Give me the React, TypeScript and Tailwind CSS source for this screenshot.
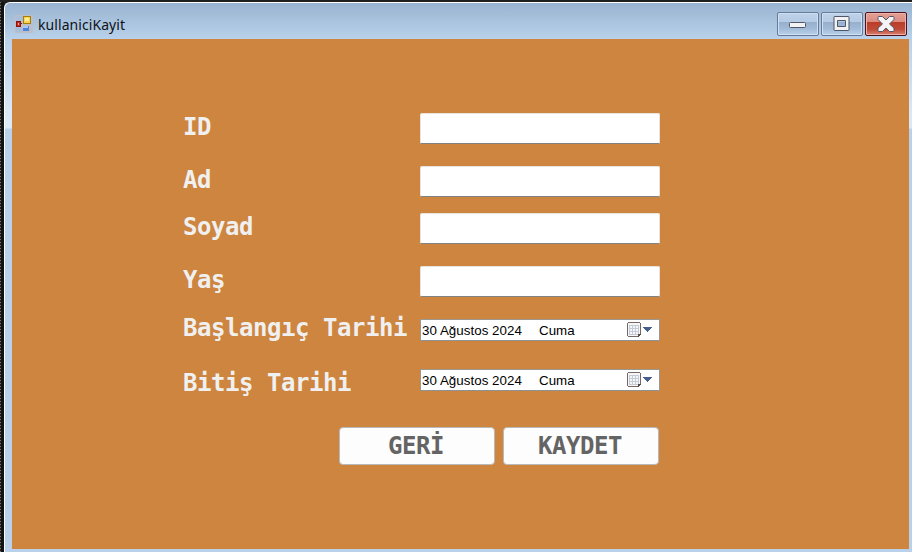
import type { ReactNode } from "react";

function AppIcon() {
  return (
    <svg width="18" height="18" viewBox="0 0 18 18" shapeRendering="crispEdges">
      <rect x="0" y="0" width="18" height="18" fill="#bdbfc6" />
      <rect x="1" y="1" width="7" height="5" fill="#a9bfd9" />
      <rect x="1" y="12" width="6" height="5" fill="#a9bfd9" />
      <rect x="8.500" y="1.500" width="7" height="7" fill="#fbd24e" stroke="#a67c0b" />
      <rect x="10" y="3" width="4" height="3" fill="#ffec9c" />
      <rect x="1.500" y="6.500" width="4" height="5" fill="#c9281c" stroke="#8c1410" />
      <rect x="3" y="8" width="1" height="2" fill="#ffb09c" />
      <rect x="6" y="8" width="1" height="1" fill="#333" />
      <rect x="8" y="11" width="6" height="5" fill="#4f83e2" />
      <rect x="8" y="11" width="5" height="2" fill="#a6c8fb" />
    </svg>
  );
}

function CaptionButton({ close, children }: { close?: boolean; children: ReactNode }) {
  const tone = close
    ? "border-[#4b1420] bg-[linear-gradient(#e3a096_0,#dc8b80_41%,#b93c28_41%,#c04b38_75%,#d98272_100%)] shadow-[inset_0_0_0_1px_#eeb0a7]"
    : "border-[#677a99] bg-[linear-gradient(#bed2e8_0,#b5cbe4_41%,#95afcc_41%,#a0bad7_70%,#b9d1eb_100%)] shadow-[inset_0_0_0_1px_#cfe0f2]";
  return (
    <button className={"flex h-[24px] w-[42px] items-center justify-center rounded-[2px] border " + tone}>
      {children}
    </button>
  );
}

function CalendarIcon() {
  return (
    <svg width="26" height="16" viewBox="0 0 26 16" shapeRendering="crispEdges">
      <rect x="1" y="1" width="12" height="14" fill="#f7f6f6" />
      <path d="M1 0h12v1H1zM0 1h1v13H0zM13 1h1v11h-1zM1 14h10v1H1z" fill="#756966" />
      <rect x="2" y="3" width="10" height="10" fill="#c5cad4" />
      <g fill="#f3f6fa">
        {[4, 7, 10].map((y) => [3, 6, 9].map((x) => <rect key={x + "-" + y} x={x} y={y} width="2" height="2" />))}
      </g>
      <path d="M11 12h3v1h-1v1h-1v1h-1z" fill="#554a48" />
      <path d="M16 5h9v1h-1v1h-1v1h-1v1h-1v1h-1V9h-1V8h-1V7h-1V6h-1z" fill="#465f8c" />
    </svg>
  );
}

function TextField() {
  return (
    <input className="block h-[31px] w-[240px] rounded-[2px] border border-[#e7e4e0] border-b-[#7f8182] bg-white px-1 outline-none" />
  );
}

function DateField() {
  return (
    <div className="flex h-[22px] w-[240px] items-center rounded-[1px] border border-[#9b9890] border-b-[#8d9294] bg-white pl-[1px] pr-[6px] font-['Liberation_Sans',sans-serif] text-[13.330px] leading-[20px] text-black">
      <span className="w-[117px] whitespace-nowrap pt-[2px] tracking-[0.040px]">30 Ağustos 2024</span>
      <span className="grow pt-[2px]">Cuma</span>
      <CalendarIcon />
    </div>
  );
}

function Row({ label, height, children }: { label: string; height: string; children: ReactNode }) {
  return (
    <div className={"flex " + height}>
      <label className="w-[237px] whitespace-nowrap text-[24px] font-bold leading-[28px] tracking-[-0.450px] text-[#f0f0f0]">
        {label}
      </label>
      {children}
    </div>
  );
}

function FormButton({ children }: { children: ReactNode }) {
  return (
    <button className="h-[38px] w-[156px] rounded-[4px] border border-[#b8b9ba] bg-[#fdfdfd] pr-[2px] text-[24px] font-bold leading-[34px] tracking-[-0.450px] text-[#646464]">
      {children}
    </button>
  );
}

export default function App() {
  return (
    <div className="flex h-[552px] w-[912px] overflow-hidden bg-[#202020] pt-[2px]">
      <div className="w-px bg-[repeating-linear-gradient(#777_0_1px,#222_1px_3px)]" />
      <div className="w-[3px] bg-[#131313]" />
      <div className="flex grow flex-col rounded-tl-[6px] border-l border-t border-white bg-[linear-gradient(#99b4d1_0,#b9d1ea_36px,#d9e6f5_105px,#dce9f6_125px,#b9d1ea_126px)] pl-[7px] pr-[3px] pb-[3px]">
        <header className="flex h-[36px] shrink-0 items-start">
          <div className="ml-[3px] mt-[12px]">
            <AppIcon />
          </div>
          <h1 className="ml-[5px] mt-[12px] grow font-['Noto_Sans','Open_Sans',sans-serif] text-[14px] leading-[20px] tracking-[0.070px] text-[#101318]">
            kullaniciKayit
          </h1>
          <div className="mr-[2px] mt-[9px] flex gap-[2px]">
            <CaptionButton>
              <svg width="18" height="7" viewBox="0 0 18 7" className="relative top-[1px]">
                <rect x=".5" y=".5" width="16" height="5" rx="1" fill="#f2f2f2" stroke="#50566a" />
              </svg>
            </CaptionButton>
            <CaptionButton>
              <svg width="18" height="16" viewBox="0 0 18 16">
                <path fillRule="evenodd" d="M1.500.5h14q.5 0 .5.500v13q0 .5-.5.500h-14q-.5 0-.5-.5V1q0-.5.500-.5zM4.500 4.500v6h8v-6z" fill="#f2f2f2" stroke="#50566a" />
              </svg>
            </CaptionButton>
            <CaptionButton close>
              <svg width="18" height="16" viewBox="0 0 18 16">
                <path d="M1.500.5h4L9 4 12.500.5h4l.5 1v2L12.500 8l4.500 4v2.500l-.5 1h-4L9 12l-3.500 3.500h-4l-.5-1V12l4.500-4L1 3.500v-2z" fill="#f5f4f4" stroke="#535468" strokeLinejoin="round" />
              </svg>
            </CaptionButton>
          </div>
        </header>
        <main className="flex grow flex-col bg-[#cd853f] pl-[171px] pt-[74px] font-['DejaVu_Sans_Mono',monospace]">
          <Row label="ID" height="h-[53px]"><TextField /></Row>
          <Row label="Ad" height="h-[47px]"><TextField /></Row>
          <Row label="Soyad" height="h-[53px]"><TextField /></Row>
          <Row label="Yaş" height="h-[48px]"><TextField /></Row>
          <Row label="Başlangıç Tarihi" height="h-[55px]"><div className="pt-[5px]"><DateField /></div></Row>
          <Row label="Bitiş Tarihi" height="h-[58px]"><DateField /></Row>
          <div className="flex gap-[8px] pl-[156px]">
            <FormButton>GERİ</FormButton>
            <FormButton>KAYDET</FormButton>
          </div>
        </main>
      </div>
    </div>
  );
}
